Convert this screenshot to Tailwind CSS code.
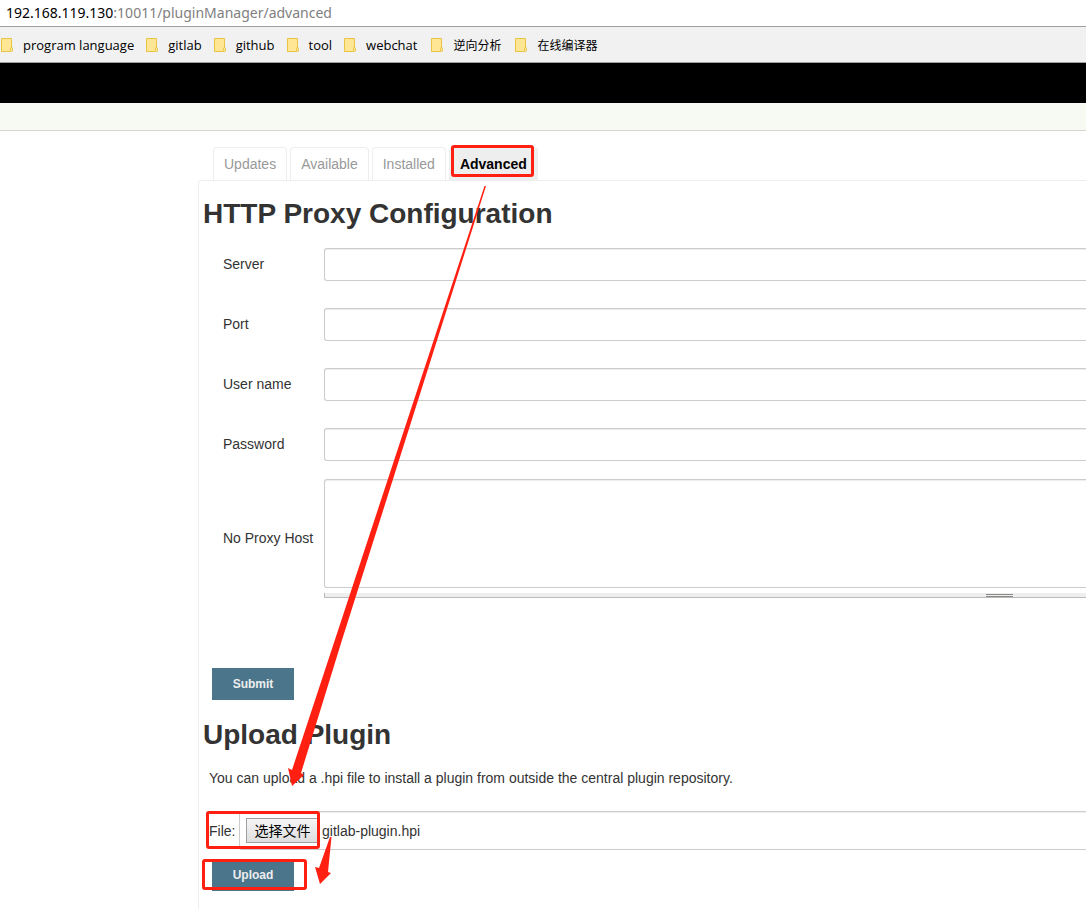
<!DOCTYPE html>
<html lang="en">
<head>
<meta charset="utf-8">
<title>Plugin Manager - Advanced</title>
<script src="https://cdn.jsdelivr.net/npm/@tailwindcss/browser@4"></script>
</head>
<body class="relative min-h-screen overflow-x-hidden bg-white font-['Liberation_Sans','Noto_Sans_CJK_SC',sans-serif] text-sm text-[#333]">
<svg class="hidden">
  <symbol id="folder" viewBox="0 0 12 14">
    <path d="M.5.5h10v9.500M.5.5v13h9" fill="#ffe694" stroke="#e8c445"/>
    <path d="M1 1h9v12H1z" fill="#ffe694"/>
    <path d="M10.500 1v9M.5 13.500h9" stroke="#e8c445" fill="none"/>
    <rect x="9.500" y="9.500" width="2" height="4" rx="1" fill="#ffe694" stroke="#e8c445"/>
  </symbol>
</svg>

<header>
  <div class="flex h-[27px] items-center border-b border-[#a0a0a0] px-1.5 font-['Noto_Sans',sans-serif] text-sm text-black">
    <span>192.168.119.130</span><span class="text-[#808080]">:10011/pluginManager/advanced</span>
  </div>
  <nav aria-label="Bookmarks" class="flex h-9 items-center gap-3 border-b border-[#a0a0a0] bg-[#f1f1f1] pl-px font-['Open_Sans','Noto_Sans_CJK_SC',sans-serif] text-[13px] text-black">
    <a href="#" class="flex items-center gap-2.5"><svg class="h-3.5 w-3"><use href="#folder"/></svg><span class="pt-0.5">program language</span></a>
    <a href="#" class="flex items-center gap-2.5"><svg class="h-3.5 w-3"><use href="#folder"/></svg><span class="pt-0.5">gitlab</span></a>
    <a href="#" class="flex items-center gap-2.5"><svg class="h-3.5 w-3"><use href="#folder"/></svg><span class="pt-0.5">github</span></a>
    <a href="#" class="flex items-center gap-2.5"><svg class="h-3.5 w-3"><use href="#folder"/></svg><span class="pt-0.5">tool</span></a>
    <a href="#" class="flex items-center gap-2.5"><svg class="h-3.5 w-3"><use href="#folder"/></svg><span class="pt-0.5">webchat</span></a>
    <a href="#" class="flex items-center gap-2.5 pl-0.5 text-xs"><svg class="h-3.5 w-3"><use href="#folder"/></svg><span class="pt-0.5">逆向分析</span></a>
    <a href="#" class="flex items-center gap-2.5 pl-0.5 text-xs"><svg class="h-3.5 w-3"><use href="#folder"/></svg><span class="pt-0.5">在线编译器</span></a>
  </nav>
  <div class="h-10 bg-black"></div>
  <div class="h-7 border-b border-[#d3d7cf] bg-[#f6faf2]"></div>
</header>

<main class="ml-[198px] pt-4">
  <nav aria-label="Plugin manager" class="flex gap-[3px] pl-[15px]">
    <a href="#" class="flex h-[33px] items-center rounded-t border border-b-0 border-[#eee] px-2.5 text-[#999]">Updates</a>
    <a href="#" class="flex h-[33px] items-center rounded-t border border-b-0 border-[#eee] px-2.5 text-[#999]">Available</a>
    <a href="#" class="flex h-[33px] items-center rounded-t border border-b-0 border-[#eee] px-2.5 text-[#999]">Installed</a>
    <a href="#" aria-current="page" class="flex h-[33px] items-center rounded-t border border-b-0 border-[#eee] bg-[#eee] px-2.5 font-bold text-black">Advanced</a>
  </nav>

  <div class="min-h-[729px] rounded-tl border-t border-l border-[#eee] pt-[17px] pl-1">
    <h1 class="text-[28px] leading-8 font-bold">HTTP Proxy Configuration</h1>
    <form class="pt-[18px]">
      <div class="grid grid-cols-[101px_1fr] items-center gap-y-[27px] pl-5">
        <label for="server" class="pb-0.5">Server</label>
        <input id="server" type="text" class="h-[33px] w-full rounded-l-[3px] border border-r-0 border-[#ccc] bg-white px-2 shadow-[inset_0_1px_1px_rgba(0,0,0,0.075)]">
        <label for="port" class="pb-0.5">Port</label>
        <input id="port" type="text" class="h-[33px] w-full rounded-l-[3px] border border-r-0 border-[#ccc] bg-white px-2 shadow-[inset_0_1px_1px_rgba(0,0,0,0.075)]">
        <label for="user" class="pb-0.5">User name</label>
        <input id="user" type="text" class="h-[33px] w-full rounded-l-[3px] border border-r-0 border-[#ccc] bg-white px-2 shadow-[inset_0_1px_1px_rgba(0,0,0,0.075)]">
        <label for="password" class="pb-0.5">Password</label>
        <input id="password" type="password" class="h-[33px] w-full rounded-l-[3px] border border-r-0 border-[#ccc] bg-white px-2 shadow-[inset_0_1px_1px_rgba(0,0,0,0.075)]">
      </div>
      <div class="grid grid-cols-[101px_1fr] items-center pt-[18px] pl-5">
        <label for="noproxy" class="pb-0.5">No Proxy Host</label>
        <div>
          <textarea id="noproxy" class="block h-[109px] w-full resize-none rounded-l-[3px] border border-r-0 border-[#ccc] bg-white p-2 shadow-[inset_0_1px_1px_rgba(0,0,0,0.075)]"></textarea>
          <div class="mt-[5px] flex h-[5px] justify-end border-b border-l border-[#bbb] bg-[#eee] pt-px pr-[73px]">
            <span class="h-[3px] w-[27px] border-y border-[#888a85]"></span>
          </div>
        </div>
      </div>
      <button type="submit" class="mt-[70px] ml-[9px] block h-8 w-[82px] border border-[#4b758b] bg-[#4b758b] text-xs font-bold text-[#eee]">Submit</button>
    </form>

    <h1 class="mt-[19px] text-[28px] leading-8 font-bold">Upload Plugin</h1>
    <form>
      <p class="mt-[17px] pl-1.5 leading-5">You can upload a .hpi file to install a plugin from outside the central plugin repository.</p>
      <div class="mt-[23px] flex items-center pl-1.5">
        <label for="file" class="w-[30px]">File:</label>
        <div class="flex h-[39px] flex-1 items-center gap-[3px] rounded-l-[3px] border border-r-0 border-[#ccc] pl-1.5 shadow-[inset_0_1px_1px_rgba(0,0,0,0.075)]">
          <button id="file" type="button" class="h-[25px] w-[73px] border border-[#a0a0a0] bg-linear-to-b from-[#f6f6f6] to-[#dedede] text-center whitespace-nowrap text-black">选择文件</button>
          <span>gitlab-plugin.hpi</span>
        </div>
      </div>
      <button type="submit" class="mt-[9px] ml-[9px] block h-8 w-[82px] border border-[#4b758b] bg-[#4b758b] text-xs font-bold text-[#eee]">Upload</button>
    </form>
  </div>
</main>

<!-- Step markers drawn over the page -->
<svg class="pointer-events-none absolute top-0 left-0 h-[909px] w-[1086px]" viewBox="0 0 1086 909" aria-hidden="true">
  <g fill="none" stroke="#ff2012" stroke-width="3">
    <rect x="452.500" y="146.500" width="80" height="29" rx="1.500"/>
    <rect x="207.500" y="812.500" width="111" height="35" rx="1.500"/>
    <rect x="203.500" y="860.500" width="102" height="28" rx="1.500"/>
  </g>
  <g fill="#ff2012">
    <path d="M484.500 186h1.500L342 640 301 773l3 2-12 11-4-18 4 2z"/>
    <path d="M330 837h1.500L328 872l3 1-11 11-5-17 4 1z"/>
  </g>
</svg>
</body>
</html>
